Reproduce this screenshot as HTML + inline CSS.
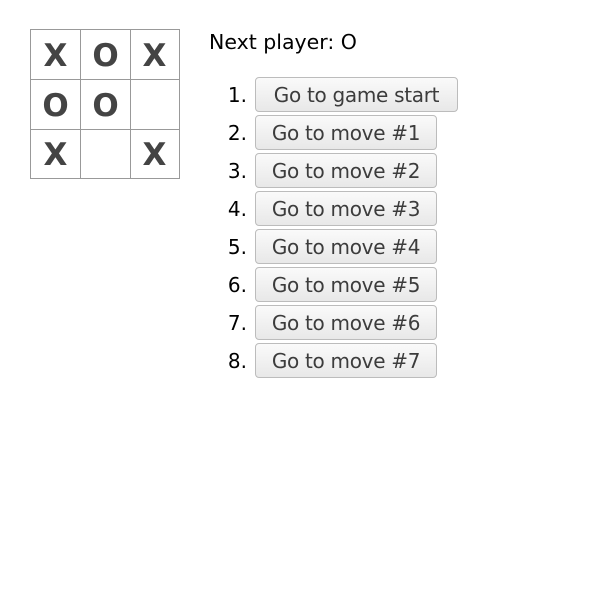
<!DOCTYPE html>
<html><head><meta charset="utf-8"><style>
body{margin:0;width:600px;height:600px;background:#fff;font-family:"DejaVu Sans",sans-serif;position:relative}
.board{position:absolute;left:30px;top:29px;width:150px;height:150px;border-top:1px solid #999;border-left:1px solid #999;box-sizing:border-box}
.sq{position:absolute;width:49px;height:49px;border-right:1px solid #999;border-bottom:1px solid #999;font:bold 31px "DejaVu Sans",sans-serif;color:#444;text-align:center;line-height:52px}
.next{position:absolute;left:209px;top:30px;font-size:20.5px;color:#000;line-height:24px}
.num{position:absolute;width:30px;left:217px;text-align:right;font-size:20px;color:#000}
.btn{position:absolute;left:255px;height:35px;box-sizing:border-box;border:1px solid #bcbcbc;border-radius:4px;background:linear-gradient(#fafafa,#e8e8e8);font:20px "DejaVu Sans",sans-serif;letter-spacing:-0.3px;color:#3c3c3c;text-align:center;line-height:35px}
</style></head><body>
<div class="board">
<div class="sq" style="left:0;top:0">X</div><div class="sq" style="left:50px;top:0">O</div><div class="sq" style="left:99px;top:0">X</div>
<div class="sq" style="left:0;top:50px">O</div><div class="sq" style="left:50px;top:50px">O</div><div class="sq" style="left:99px;top:50px"></div>
<div class="sq" style="left:0;top:99px">X</div><div class="sq" style="left:50px;top:99px"></div><div class="sq" style="left:99px;top:99px">X</div>
</div>
<div class="next">Next player: O</div>
<div class="num" style="top:83px">1.</div><div class="btn" style="top:77px;width:203px">Go to game start</div>
<div class="num" style="top:121px">2.</div><div class="btn" style="top:115px;width:182px">Go to move #1</div>
<div class="num" style="top:159px">3.</div><div class="btn" style="top:153px;width:182px">Go to move #2</div>
<div class="num" style="top:197px">4.</div><div class="btn" style="top:191px;width:182px">Go to move #3</div>
<div class="num" style="top:235px">5.</div><div class="btn" style="top:229px;width:182px">Go to move #4</div>
<div class="num" style="top:273px">6.</div><div class="btn" style="top:267px;width:182px">Go to move #5</div>
<div class="num" style="top:311px">7.</div><div class="btn" style="top:305px;width:182px">Go to move #6</div>
<div class="num" style="top:349px">8.</div><div class="btn" style="top:343px;width:182px">Go to move #7</div>
</body></html>
